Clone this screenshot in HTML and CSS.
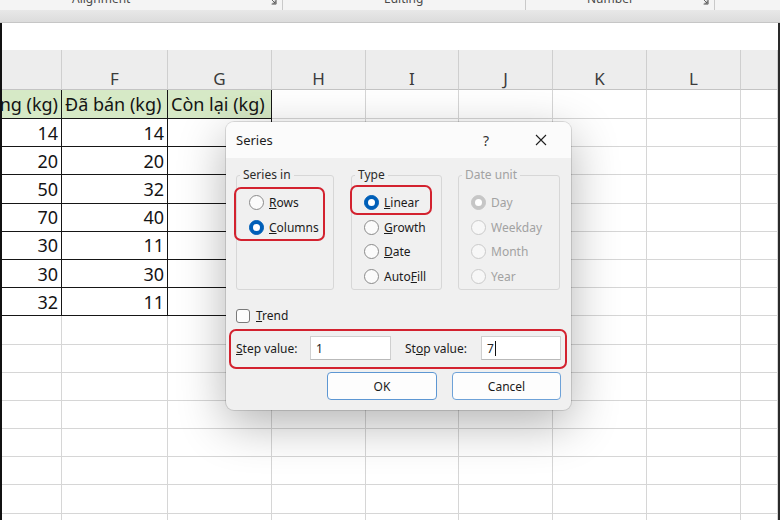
FILE: index.html
```html
<!DOCTYPE html>
<html>
<head>
<meta charset="utf-8">
<title>Series</title>
<link rel="stylesheet" href="styles.css">
</head>
<body>
<div class="app">
  <div class="ribbon">
    <div class="rgroup rg1"><span class="rlabel">Alignment</span><svg class="launch" viewBox="0 0 10 10"><path d="M1 4V1h8v8H4M4 4l4 4M8 5v3H5" fill="none" stroke="#555" stroke-width="1"/></svg></div>
    <div class="rgroup rg2"><span class="rlabel">Editing</span></div>
    <div class="rgroup rg3"><span class="rlabel">Number</span><svg class="launch" viewBox="0 0 10 10"><path d="M1 4V1h8v8H4M4 4l4 4M8 5v3H5" fill="none" stroke="#555" stroke-width="1"/></svg></div>
    <div class="rgroup rg4"></div>
  </div>
  <div class="ribbon-foot"></div>
  <div class="sheet">
    <div class="formula"></div>
    <div class="grid">
      <div class="hd"></div><div class="hd">F</div><div class="hd">G</div><div class="hd">H</div><div class="hd">I</div><div class="hd">J</div><div class="hd">K</div><div class="hd">L</div><div class="hd"></div>

      <div class="tb gr rt">ng (kg)</div><div class="tb gr lt">Đã bán (kg)</div><div class="tb gr lt">Còn lại (kg)</div><div></div><div></div><div></div><div></div><div></div><div></div>

      <div class="tb rt">14</div><div class="tb rt">14</div><div class="tb"></div><div></div><div></div><div></div><div></div><div></div><div></div>
      <div class="tb rt">20</div><div class="tb rt">20</div><div class="tb"></div><div></div><div></div><div></div><div></div><div></div><div></div>
      <div class="tb rt">50</div><div class="tb rt">32</div><div class="tb"></div><div></div><div></div><div></div><div></div><div></div><div></div>
      <div class="tb rt">70</div><div class="tb rt">40</div><div class="tb"></div><div></div><div></div><div></div><div></div><div></div><div></div>
      <div class="tb rt">30</div><div class="tb rt">11</div><div class="tb"></div><div></div><div></div><div></div><div></div><div></div><div></div>
      <div class="tb rt">30</div><div class="tb rt">30</div><div class="tb"></div><div></div><div></div><div></div><div></div><div></div><div></div>
      <div class="tb rt">32</div><div class="tb rt">11</div><div class="tb"></div><div></div><div></div><div></div><div></div><div></div><div></div>

      <div></div><div></div><div></div><div></div><div></div><div></div><div></div><div></div><div></div>
      <div></div><div></div><div></div><div></div><div></div><div></div><div></div><div></div><div></div>
      <div></div><div></div><div></div><div></div><div></div><div></div><div></div><div></div><div></div>
      <div></div><div></div><div></div><div></div><div></div><div></div><div></div><div></div><div></div>
      <div></div><div></div><div></div><div></div><div></div><div></div><div></div><div></div><div></div>
      <div></div><div></div><div></div><div></div><div></div><div></div><div></div><div></div><div></div>
      <div></div><div></div><div></div><div></div><div></div><div></div><div></div><div></div><div></div>
      <div></div><div></div><div></div><div></div><div></div><div></div><div></div><div></div><div></div>
    </div>
  </div>

  <div class="dialog">
    <div class="dlg-title">
      <span class="dlg-name">Series</span>
      <span class="dlg-help">?</span>
      <svg class="dlg-close" viewBox="0 0 12 12"><path d="M1 1L11 11M11 1L1 11" stroke="#1f1f1f" stroke-width="1.1" fill="none"/></svg>
    </div>
    <div class="dlg-body">
      <div class="groups">
        <fieldset class="grp grp-series">
          <legend>Series in</legend>
          <div class="opts">
            <div class="opt"><span class="radio"></span><span><u>R</u>ows</span></div>
            <div class="opt"><span class="radio on"></span><span><u>C</u>olumns</span></div>
          </div>
        </fieldset>
        <fieldset class="grp grp-type">
          <legend>Type</legend>
          <div class="opts">
            <div class="opt"><span class="radio on"></span><span><u>L</u>inear</span></div>
            <div class="opt"><span class="radio"></span><span><u>G</u>rowth</span></div>
            <div class="opt"><span class="radio"></span><span><u>D</u>ate</span></div>
            <div class="opt"><span class="radio"></span><span>Auto<u>F</u>ill</span></div>
          </div>
        </fieldset>
        <fieldset class="grp grp-date disabled">
          <legend>Date unit</legend>
          <div class="opts">
            <div class="opt"><span class="radio dis on"></span><span>Day</span></div>
            <div class="opt"><span class="radio dis"></span><span>Weekday</span></div>
            <div class="opt"><span class="radio dis"></span><span>Month</span></div>
            <div class="opt"><span class="radio dis"></span><span>Year</span></div>
          </div>
        </fieldset>
      </div>
      <div class="trend"><span class="check"></span><span><u>T</u>rend</span></div>
      <div class="values">
        <span class="vlabel"><u>S</u>tep value:</span>
        <span class="input in1">1</span>
        <span class="vlabel vl2">St<u>o</u>p value:</span>
        <span class="input in2">7<span class="caret"></span></span>
      </div>
      <div class="buttons">
        <span class="btn btn-ok">OK</span>
        <span class="btn btn-cancel">Cancel</span>
      </div>
    </div>
    <div class="mark mark-series"></div>
    <div class="mark mark-type"></div>
    <div class="mark mark-step"></div>
  </div>
</div>
</body>
</html>
```

FILE: styles.css
```css
* { box-sizing: border-box; }
html, body { margin: 0; padding: 0; }
body {
  width: 780px;
  height: 520px;
  overflow: hidden;
  background: #ffffff;
  font-family: "Noto Sans", "Open Sans", sans-serif;
}
.app {
  position: relative;
  width: 780px;
  height: 520px;
  overflow: hidden;
  display: flex;
  flex-direction: column;
}

/* ribbon */
.ribbon {
  height: 10px;
  flex: none;
  display: flex;
  background: #f4f4f4;
  overflow: hidden;
}
.rgroup {
  display: flex;
  align-items: flex-start;
  height: 10px;
}
.rg1 { width: 283px; padding-left: 72px; border-right: 1px solid #c9c9c9; }
.rg2 { width: 243px; padding-left: 101px; border-right: 1px solid #c9c9c9; }
.rg3 { width: 189px; padding-left: 61px; border-right: 1px solid #c9c9c9; }
.rg4 { flex: 1; }
.rlabel {
  font-size: 12px;
  line-height: 12px;
  margin-top: -7px;
  color: #4a4a4a;
  white-space: nowrap;
}
.launch {
  width: 9px;
  height: 9px;
  margin-left: auto;
  margin-right: 5px;
  margin-top: -4px;
}
.ribbon-foot {
  height: 13px;
  flex: none;
  background: linear-gradient(#e8e8e8, #dcdcdc);
  border-bottom: 1px solid #c6c6c6;
}

/* sheet */
.sheet {
  flex: 1;
  display: flex;
  flex-direction: column;
  border-left: 2px solid #111111;
  border-right: 2px solid #2a2a2a;
  overflow: hidden;
}
.formula {
  height: 27px;
  flex: none;
  background: #ffffff;
}
.grid {
  display: grid;
  grid-template-columns: 60px 106px 104px 94px 93px 94px 94px 94px 1fr;
  grid-template-rows: 40px 29px;
  grid-auto-rows: 28.2px;
  font-size: 18px;
  color: #141414;
}
.grid > div {
  border-right: 1px solid #d6d6d6;
  border-bottom: 1px solid #d6d6d6;
  display: flex;
  align-items: center;
  white-space: nowrap;
  overflow: hidden;
}
.grid > .hd {
  background: #ededed;
  border-right-color: #cfcfcf;
  border-bottom-color: #c4c4c4;
  justify-content: center;
  align-items: flex-end;
  font-size: 17px;
  line-height: 20px;
  padding-bottom: 0;
  color: #3b3b3b;
}
.grid > .tb {
  border-right-color: #161616;
  border-bottom-color: #161616;
}
.grid > .gr { background: #d6e9c6; }
.grid > .rt { justify-content: flex-end; padding-right: 3px; }
.grid > .lt { justify-content: flex-start; padding-left: 3px; }

/* dialog */
.dialog {
  position: absolute;
  left: 226px;
  top: 122px;
  width: 345px;
  height: 288px;
  border-radius: 8px;
  background: #f0f0f0;
  box-shadow: 0 0 0 1px rgba(0, 0, 0, 0.12), 0 14px 48px rgba(0, 0, 0, 0.3);
  font-size: 12px;
  color: #1b1b1b;
  display: flex;
  flex-direction: column;
}
.dlg-title {
  height: 36px;
  flex: none;
  display: flex;
  align-items: center;
  padding: 0 24px 0 10px;
  background: #fbfbfb;
  border-radius: 8px 8px 0 0;
}
.dlg-name { flex: 1; font-size: 13px; }
.dlg-help { font-size: 14px; color: #333; width: 8px; }
.dlg-close { width: 12px; height: 12px; margin-left: 44px; }

.dlg-body {
  flex: 1;
  padding: 9px 10px 10px 10px;
  display: flex;
  flex-direction: column;
}
.groups {
  display: flex;
  gap: 17px;
}
.grp {
  margin: 0;
  padding: 0 0 0 12px;
  border: 1px solid #d7d7d7;
  border-radius: 3px;
  height: 123px;
  min-width: 0;
}
.grp-series { width: 98px; }
.grp-type { width: 91px; }
.grp-date { width: 102px; margin-left: -1px; }
.grp legend {
  font-size: 12px;
  line-height: 16px;
  padding: 0 3px;
  margin-left: -9px;
  color: #2a2a2a;
}
.grp.disabled legend, .grp.disabled .opt { color: #a2a2a2; }
.opts {
  padding-top: 7.5px;
  display: flex;
  flex-direction: column;
}
.opt {
  height: 24.5px;
  display: flex;
  align-items: center;
  gap: 5px;
  white-space: nowrap;
}
.radio {
  width: 15px;
  height: 15px;
  flex: none;
  border-radius: 50%;
  border: 1px solid #8a8a8a;
  background: #fbfbfb;
  display: flex;
  align-items: center;
  justify-content: center;
}
.radio.on {
  background: #005fb8;
  border-color: #005fb8;
}
.radio.on::after {
  content: "";
  width: 7px;
  height: 7px;
  border-radius: 50%;
  background: #ffffff;
}
.radio.dis { border-color: #cacaca; background: #f7f7f7; }
.radio.dis.on { background: #c6c6c6; border-color: #c6c6c6; }

.trend {
  margin-top: 17.5px;
  height: 16px;
  display: flex;
  align-items: center;
  gap: 6px;
}
.check {
  width: 14px;
  height: 14px;
  border: 1px solid #7a7a7a;
  border-radius: 3px;
  background: #fdfdfd;
}
.values {
  margin-top: 12.5px;
  height: 24px;
  display: flex;
  align-items: center;
}
.vlabel { width: 74px; white-space: nowrap; }
.vl2 { width: 76px; margin-left: 14px; }
.input {
  height: 24px;
  background: #ffffff;
  border: 1px solid #cfcfcf;
  border-bottom-color: #b9b9b9;
  display: flex;
  align-items: center;
  padding-left: 5px;
  color: #262626;
}
.in1 { width: 81px; }
.in2 { width: 80px; }
.caret {
  width: 1px;
  height: 15px;
  background: #111;
  margin-left: 1px;
}
.buttons {
  margin-top: 12px;
  display: flex;
  justify-content: flex-end;
  gap: 15px;
}
.btn {
  height: 28px;
  border-radius: 4px;
  background: #fdfdfd;
  border: 1px solid #6ea2d8;
  display: flex;
  align-items: center;
  justify-content: center;
  font-size: 12px;
  color: #1b1b1b;
}
.btn-ok { width: 110px; border-color: #5d97d3; }
.btn-cancel { width: 109px; }

/* red annotation boxes over the dialog */
.mark {
  position: absolute;
  border: 2px solid #d3222f;
  border-radius: 7px;
}
.mark-series { left: 8px; top: 65px; width: 91px; height: 54px; }
.mark-type { left: 124px; top: 63px; width: 82px; height: 30px; }
.mark-step { left: 3px; top: 207px; width: 338px; height: 40px; }
```
